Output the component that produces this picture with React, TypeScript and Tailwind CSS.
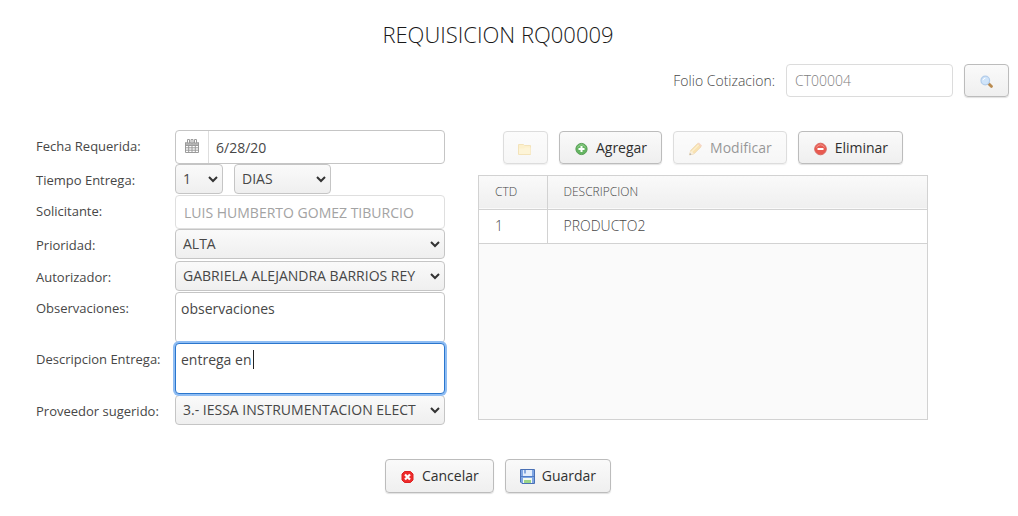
import React, { useState } from 'react';
import type { ComponentProps } from 'react';

const raised =
  'inline-flex items-center justify-center rounded border border-[#bcbcbc] bg-linear-to-b from-[#fafafa] to-[#efefef] text-[#303030] shadow-[0_1px_1px_rgba(0,0,0,0.12)] disabled:opacity-50';
const label = 'h-8 text-[13px] leading-8 text-[#474747]';
const textarea = 'block h-[51px] w-full resize-none rounded border bg-white px-[5px] py-[5px] text-sm leading-[22px] text-[#474747]';

function SearchIcon() {
  return (
    <svg className="mt-0.5" width="16" height="16" viewBox="0 0 16 16" aria-hidden="true">
      <path d="M9.500 9.500l3 2.900" stroke="#b98a4e" strokeWidth="2.800" strokeLinecap="round" />
      <circle cx="6.300" cy="6.500" r="4.300" fill="#cfe4fa" stroke="#b3cdea" strokeWidth="1.200" />
      <path d="M4 6.200a2.500 2.500 0 0 1 2.400-2" stroke="#fff" fill="none" />
    </svg>
  );
}

function FolderIcon() {
  return (
    <svg className="mt-0.5" width="16" height="16" viewBox="0 0 16 16" aria-hidden="true">
      <path d="M1.500 3.500h5l1 1h6v9h-12z" fill="#fbe29a" stroke="#e8c878" />
      <path d="M2 7.500h5l1-1h5.500V13H2z" fill="#fdeab0" />
    </svg>
  );
}

function AddIcon() {
  return (
    <svg className="mt-0.5" width="16" height="16" viewBox="0 0 16 16" aria-hidden="true">
      <circle cx="7.500" cy="8" r="5.600" fill="#65b562" stroke="#5a9f58" />
      <path d="M3.500 6.500a4.300 4.300 0 0 1 8 0" stroke="#94d08e" fill="none" />
      <path d="M7.500 5v6M4.500 8h6" stroke="#fff" strokeWidth="2" />
    </svg>
  );
}

function PencilIcon() {
  return (
    <svg className="mt-0.5" width="16" height="16" viewBox="0 0 16 16" aria-hidden="true">
      <path d="M1.500 14l1.200-4.500 7-7 3.300 3.300-7 7z" fill="#f4c766" stroke="#d7a34c" strokeWidth=".7" />
      <path d="M3.800 10.700l7-7" stroke="#fbe3a5" strokeWidth="1.200" />
      <path d="M9.700 2.500l1.100-1 3.300 3.300-1.100 1z" fill="#efad8c" />
      <path d="M1.500 14l1.200-4.500 3.300 3.300z" fill="#f3dfbb" />
      <path d="M1.500 14l.5-1.900 1.400 1.400z" fill="#555" />
    </svg>
  );
}

function DeleteIcon() {
  return (
    <svg className="mt-0.5" width="16" height="16" viewBox="0 0 16 16" aria-hidden="true">
      <circle cx="7.500" cy="8" r="5.800" fill="#e85a50" stroke="#d9655e" />
      <path d="M3.500 6.500a4.300 4.300 0 0 1 8 0" stroke="#f49a91" fill="none" />
      <path d="M4.500 8h6" stroke="#fff" strokeWidth="2" />
    </svg>
  );
}

function CancelIcon() {
  return (
    <svg className="mt-0.5" width="16" height="16" viewBox="0 0 16 16" aria-hidden="true">
      <path d="M4.500 2.500h6l2.500 2.500v6l-2.500 2.500h-6L2 11V5z" fill="#ed2b2b" stroke="#dd2222" strokeLinejoin="round" />
      <path d="M5 5.500l5 5m0-5l-5 5" stroke="#fff" strokeWidth="2.200" />
    </svg>
  );
}

function SaveIcon() {
  return (
    <svg className="mt-0.5" width="16" height="16" viewBox="0 0 16 16" aria-hidden="true">
      <path d="M.5.500h14v14H2L.5 13z" fill="#7fa6e4" stroke="#4a70b4" />
      <path d="M3 1h9v6H3z" fill="#e3edfb" />
      <path d="M4 1h2v3.500H4z" fill="#85a8df" />
      <path d="M1 7.500h13" stroke="#4f7cc6" />
      <path d="M3 9h9v5H3z" fill="#f4faf0" />
      <path d="M4 11h7v3H4z" fill="#9bd487" />
    </svg>
  );
}

function CalendarIcon() {
  return (
    <svg width="16" height="16" viewBox="0 0 16 16" fill="none" stroke="#9b9b9b" aria-hidden="true">
      <path d="M1.500 3.500h13v10h-13zM1.500 6.500h13M1.500 8.800h13M1.500 11.200h13M4.700 6v7.500M8 6v7.500M11.300 6v7.500" />
      <path d="M2 3h12v3H2z" fill="#b5b5b5" stroke="none" />
      <path d="M3.500.500h2v3.500h-2zM7 .500h2v3.500H7zM10.500.500h2v3.500h-2z" fill="#fff" />
    </svg>
  );
}

function Select({ width, ...props }: ComponentProps<'select'> & { width: string }) {
  return (
    <div className={`relative h-[30px] ${width}`}>
      <select
        {...props}
        className="block h-full w-full appearance-none rounded border border-[#c5c5c5] bg-linear-to-b from-[#fafafa] to-[#efefef] pr-5 pl-[7px] text-sm text-[#474747]"
      />
      <svg
        className="pointer-events-none absolute top-3 right-[5px]"
        width="10"
        height="7"
        viewBox="0 0 10 7"
        fill="none"
        stroke="#333"
        strokeWidth="2"
        aria-hidden="true"
      >
        <path d="M1 1l4 4 4-4" />
      </svg>
    </div>
  );
}

const initialDelivery = 'entrega en';

export default function App() {
  const [delivery, setDelivery] = useState(initialDelivery);

  return (
    <main className="bg-white pb-6 font-['Open_Sans',sans-serif] text-base text-[#474747]">
      <h1 className="pt-4 pr-[22px] text-center text-[22px] leading-9 font-light text-[#191919]">REQUISICION RQ00009</h1>

      <div className="mt-3 flex items-center justify-end pr-[9px]">
        <label htmlFor="folio" className="text-sm font-light">Folio Cotizacion:</label>
        <input
          id="folio"
          disabled
          defaultValue="CT00004"
          className="ml-[11px] h-[33px] w-[167px] rounded border border-[#dcdcdc] bg-white px-2 text-sm font-light text-[#808080]"
        />
        <button type="button" aria-label="Buscar" className={`${raised} ml-[11px] h-[33px] w-[45px]`}>
          <SearchIcon />
        </button>
      </div>

      <form onSubmit={(e) => e.preventDefault()}>
        <div className="mt-[33px] grid grid-cols-[minmax(0,409fr)_minmax(0,450fr)] gap-[33px] pr-[90px] pl-9">
          <div className="grid grid-cols-[139px_minmax(0,1fr)] grid-rows-[34px_31px_34px_32px_31px_51px_52px_30px] self-start">
            <label htmlFor="fecha" className={label}>Fecha Requerida:</label>
            <div className="flex h-[34px] overflow-hidden rounded border border-[#c5c5c5] bg-white">
              <button type="button" aria-label="Abrir calendario" className="flex w-[33px] shrink-0 items-center justify-center border-r border-[#dedede]">
                <CalendarIcon />
              </button>
              <input id="fecha" defaultValue="6/28/20" className="min-w-0 flex-1 px-[7px] pt-0.5 text-sm outline-none" />
            </div>

            <label htmlFor="tiempo" className={label}>Tiempo Entrega:</label>
            <div className="flex gap-[11px]">
              <Select id="tiempo" width="w-12">
                <option>1</option>
                <option>2</option>
              </Select>
              <Select aria-label="Unidad de tiempo" width="w-[97px]">
                <option>DIAS</option>
                <option>SEMANAS</option>
              </Select>
            </div>

            <label htmlFor="solicitante" className={label}>Solicitante:</label>
            <input
              id="solicitante"
              disabled
              defaultValue="LUIS HUMBERTO GOMEZ TIBURCIO"
              className="h-[34px] w-full rounded border border-[#dfdfdf] bg-white px-2 text-sm text-[#a3a3a3]"
            />

            <label htmlFor="prioridad" className={label}>Prioridad:</label>
            <Select id="prioridad" width="w-full">
              <option>ALTA</option>
              <option>BAJA</option>
            </Select>

            <label htmlFor="autorizador" className={label}>Autorizador:</label>
            <Select id="autorizador" width="w-full">
              <option>GABRIELA ALEJANDRA BARRIOS REY</option>
            </Select>

            <label htmlFor="observaciones" className={label}>Observaciones:</label>
            <textarea id="observaciones" defaultValue="observaciones" className={`${textarea} border-[#c5c5c5]`} />

            <label htmlFor="entrega" className={label}>Descripcion Entrega:</label>
            <div className="relative z-10 h-[51px]">
              <textarea
                id="entrega"
                autoFocus
                value={delivery}
                onChange={(e) => setDelivery(e.target.value)}
                className={`${textarea} border-[#2a76cd] shadow-[0_0_0_2px_#8fbdf3] outline-none`}
              />
              {delivery === initialDelivery && (
                <span aria-hidden="true" className="pointer-events-none absolute top-[7px] left-[78px] h-[19px] w-px bg-[#222]" />
              )}
            </div>

            <label htmlFor="proveedor" className={label}>Proveedor sugerido:</label>
            <Select id="proveedor" width="w-full">
              <option>3.- IESSA INSTRUMENTACION ELECT</option>
            </Select>
          </div>

          <section className="flex h-[290px] flex-col">
            <div className="flex justify-center gap-[11px] pt-px">
              <button type="button" disabled aria-label="Abrir" className={`${raised} h-[33px] w-[45px]`}>
                <FolderIcon />
              </button>
              <button type="button" className={`${raised} h-[33px] gap-[6px] px-[14px] text-sm`}>
                <AddIcon />
                Agregar
              </button>
              <button type="button" disabled className={`${raised} h-[33px] gap-[6px] px-[14px] text-sm`}>
                <PencilIcon />
                Modificar
              </button>
              <button type="button" className={`${raised} h-[33px] gap-[6px] px-[14px] text-sm`}>
                <DeleteIcon />
                Eliminar
              </button>
            </div>
            <div className="mt-[11px] flex-1 border border-[#d2d2d2] bg-[#fafafa]">
              <table className="w-full border-collapse text-left font-light">
                <thead>
                  <tr className="h-[33px] border-b border-[#d2d2d2] bg-linear-to-b from-[#fafafa] to-[#efefef] text-xs">
                    <th className="w-[68px] border-r border-[#d2d2d2] pl-4 font-light">CTD</th>
                    <th className="pl-4 font-light">DESCRIPCION</th>
                  </tr>
                </thead>
                <tbody>
                  <tr className="h-[34px] border-b border-[#d2d2d2] bg-white text-sm">
                    <td className="border-r border-[#d2d2d2] pl-4">1</td>
                    <td className="pl-4">PRODUCTO2</td>
                  </tr>
                </tbody>
              </table>
            </div>
          </section>
        </div>

        <div className="mt-[34px] flex justify-center gap-[11px] pr-[22px]">
          <button type="button" className={`${raised} h-[34px] gap-[6px] px-[14px] text-sm`}>
            <CancelIcon />
            Cancelar
          </button>
          <button type="submit" className={`${raised} h-[34px] gap-[6px] px-[14px] text-sm`}>
            <SaveIcon />
            Guardar
          </button>
        </div>
      </form>
    </main>
  );
}
